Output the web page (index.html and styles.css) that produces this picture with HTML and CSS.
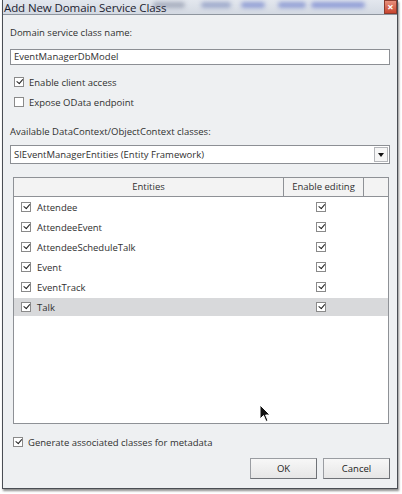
FILE: index.html
```html
<!DOCTYPE html>
<html lang="en">
<head>
    <meta charset="UTF-8">
    <title>Add New Domain Service Class</title>
    <link rel="stylesheet" href="styles.css">
</head>
<body>
    <div class="dialog">
        <div class="titlebar">
            <span class="title">Add New Domain Service Class</span>
            <span class="smudge s1"></span>
            <span class="smudge s2"></span>
            <span class="smudge s3"></span>
            <span class="smudge s4"></span>
            <span class="smudge s5"></span>
            <span class="close">&#215;</span>
        </div>

        <div class="content">
            <div class="label first">Domain service class name:</div>
            <div class="textbox">EventManagerDbModel</div>

            <div class="option opt1">
                <span class="check on"></span>
                <span>Enable client access</span>
            </div>
            <div class="option opt2">
                <span class="check"></span>
                <span>Expose OData endpoint</span>
            </div>

            <div class="label second">Available DataContext/ObjectContext classes:</div>
            <div class="combo">
                <span class="combo-text">SIEventManagerEntities (Entity Framework)</span>
                <span class="combo-btn"><span class="arrow"></span></span>
            </div>

            <div class="grid">
                <div class="grid-head">
                    <div class="col-name">Entities</div>
                    <div class="col-edit">Enable editing</div>
                    <div class="col-pad"></div>
                </div>
                <div class="grid-body" id="rows"></div>
            </div>

            <div class="option opt3">
                <span class="check on"></span>
                <span>Generate associated classes for metadata</span>
            </div>

            <div class="buttons">
                <button>OK</button>
                <button>Cancel</button>
            </div>
        </div>

        <svg class="cursor" width="12" height="19" viewBox="0 0 12 19">
            <path d="M1 1 L1 15 L4.5 11.5 L7 17.5 L9 16.6 L6.6 11 L11 11 Z" fill="#111" stroke="#fff" stroke-width="1"/>
        </svg>
    </div>

    <script>
        var entities = ['Attendee', 'AttendeeEvent', 'AttendeeScheduleTalk', 'Event', 'EventTrack', 'Talk'];
        var rows = document.getElementById('rows');
        entities.forEach(function(name, i) {
            var row = document.createElement('div');
            row.className = 'grid-row' + (i === entities.length - 1 ? ' selected' : '');
            row.innerHTML =
                '<div class="col-name"><span class="check on"></span><span class="entity">' + name + '</span></div>' +
                '<div class="col-edit"><span class="check on"></span></div>' +
                '<div class="col-pad"></div>';
            rows.appendChild(row);
        });
    </script>
</body>
</html>
```

FILE: styles.css
```css
* {
    box-sizing: border-box;
    margin: 0;
    padding: 0;
}

body {
    background: #fff;
    font-family: 'Open Sans', 'Noto Sans', sans-serif;
    font-size: 9.5px;
    color: #303030;
    width: 402px;
    height: 494px;
    overflow: hidden;
}

.dialog {
    position: relative;
    margin-left: 2px;
    width: 396px;
    height: 489px;
    border: 1px solid #4a4e54;
    border-top: none;
    background: #eef0f2;
    box-shadow: 1px 2px 2px rgba(0,0,0,0.45);
}

.titlebar {
    position: relative;
    height: 15px;
    background: linear-gradient(#e3e7ee, #d3d9e2);
    border-bottom: 1px solid #8e959e;
    overflow: hidden;
}

.title {
    position: relative;
    z-index: 2;
    display: block;
    padding-left: 1px;
    line-height: 15px;
    font-size: 11.5px;
    color: #1c2230;
    letter-spacing: -0.1px;
}

.smudge {
    position: absolute;
    top: 2px;
    height: 6px;
    border-radius: 3px;
    filter: blur(2px);
    opacity: 0.8;
}

.s1 { left: 150px; width: 32px; background: #9aa1b4; }
.s2 { left: 198px; width: 30px; background: #8f9cc4; }
.s3 { left: 238px; width: 24px; background: #7f8fd0; }
.s4 { left: 275px; width: 28px; background: #7f8fd0; }
.s5 { left: 308px; width: 54px; background: #7c8bd2; }

.close {
    position: absolute;
    right: 0;
    top: 0;
    width: 13px;
    height: 14px;
    background: linear-gradient(#e8907c, #c8452e);
    border: 1px solid #8a3a2e;
    color: #fff;
    font-size: 11px;
    font-weight: bold;
    line-height: 11px;
    text-align: center;
}

.content {
    padding: 0 7px 0 7px;
}

.label {
    line-height: 16px;
}

.label.first {
    padding-top: 10px;
}

.label.second {
    margin-top: 14px;
}

.textbox {
    margin-top: 8px;
    height: 16px;
    background: #fff;
    border: 1px solid #8c8f94;
    padding-left: 3px;
    line-height: 14px;
}

.option {
    display: flex;
    align-items: center;
    height: 16px;
}

.opt1 {
    margin-top: 9px;
    padding-left: 4px;
}

.opt2 {
    margin-top: 4px;
    padding-left: 4px;
}

.opt3 {
    margin-top: 10px;
    padding-left: 3px;
}

.option .check {
    margin-right: 5px;
}

.check {
    display: inline-block;
    position: relative;
    width: 10px;
    height: 10px;
    background: #fff;
    border: 1px solid #8a8a8a;
    flex: none;
}

.check.on::after {
    content: "";
    position: absolute;
    left: 1px;
    top: 0px;
    width: 5px;
    height: 3px;
    border-left: 1.5px solid #222;
    border-bottom: 1.5px solid #222;
    transform: rotate(-50deg) translate(0px, 1px);
}

.combo {
    display: flex;
    margin-top: 5px;
    height: 19px;
    background: #fff;
    border: 1px solid #8c8f94;
    align-items: center;
}

.combo-text {
    flex: 1;
    padding-left: 3px;
}

.combo-btn {
    display: flex;
    align-items: center;
    justify-content: center;
    width: 14px;
    height: 15px;
    margin-right: 1px;
    border: 1px solid #b4b6ba;
    background: #f6f6f6;
}

.arrow {
    width: 0;
    height: 0;
    border-left: 3px solid transparent;
    border-right: 3px solid transparent;
    border-top: 4px solid #111;
}

.grid {
    margin: 13px 1px 0 3px;
    height: 247px;
    background: #fff;
    border: 1px solid #8e9196;
}

.grid-head {
    display: flex;
    height: 19px;
    background: #f3f3f3;
    border-bottom: 1px solid #8e9196;
    line-height: 18px;
}

.grid-head .col-name,
.grid-head .col-edit {
    border-right: 1px solid #8e9196;
    text-align: center;
}

.col-name {
    width: 270px;
}

.col-edit {
    width: 80px;
}

.col-pad {
    flex: 1;
}

.grid-row {
    display: flex;
    align-items: center;
    height: 20px;
}

.grid-row .col-name {
    display: flex;
    align-items: center;
    padding-left: 7px;
}

.grid-row .col-edit {
    display: flex;
    justify-content: center;
    padding-right: 7px;
}

.entity {
    margin-left: 6px;
}

.grid-row.selected {
    background: #d8d9db;
    height: 18px;
    margin-top: 1px;
}

.buttons {
    display: flex;
    justify-content: flex-end;
    gap: 6px;
    margin-top: 8px;
}

button {
    width: 67px;
    height: 21px;
    font-family: 'Open Sans', 'Noto Sans', sans-serif;
    font-size: 9.5px;
    color: #222;
    background: linear-gradient(#f7f7f7, #e6e6e6);
    border: 1px solid #9a9da2;
    border-right-color: #6f7277;
    border-bottom-color: #6f7277;
}

.cursor {
    position: absolute;
    left: 256px;
    top: 404px;
}
```
